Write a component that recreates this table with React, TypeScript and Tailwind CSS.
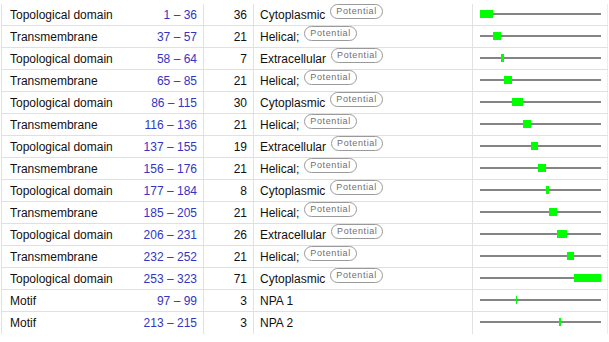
import React from "react";

type Feature = {
  key: string;
  start: number;
  end: number;
  desc: string;
  potential?: boolean;
};

const SEQ_LEN = 323;
const TRACK_W = 121;

const features: Feature[] = [
  { key: "Topological domain", start: 1, end: 36, desc: "Cytoplasmic", potential: true },
  { key: "Transmembrane", start: 37, end: 57, desc: "Helical;", potential: true },
  { key: "Topological domain", start: 58, end: 64, desc: "Extracellular", potential: true },
  { key: "Transmembrane", start: 65, end: 85, desc: "Helical;", potential: true },
  { key: "Topological domain", start: 86, end: 115, desc: "Cytoplasmic", potential: true },
  { key: "Transmembrane", start: 116, end: 136, desc: "Helical;", potential: true },
  { key: "Topological domain", start: 137, end: 155, desc: "Extracellular", potential: true },
  { key: "Transmembrane", start: 156, end: 176, desc: "Helical;", potential: true },
  { key: "Topological domain", start: 177, end: 184, desc: "Cytoplasmic", potential: true },
  { key: "Transmembrane", start: 185, end: 205, desc: "Helical;", potential: true },
  { key: "Topological domain", start: 206, end: 231, desc: "Extracellular", potential: true },
  { key: "Transmembrane", start: 232, end: 252, desc: "Helical;", potential: true },
  { key: "Topological domain", start: 253, end: 323, desc: "Cytoplasmic", potential: true },
  { key: "Motif", start: 97, end: 99, desc: "NPA 1" },
  { key: "Motif", start: 213, end: 215, desc: "NPA 2" },
];

function Track({ start, end }: { start: number; end: number }) {
  const len = end - start + 1;
  const left = ((start - 1) / SEQ_LEN) * TRACK_W;
  const width = Math.max(1, (len / SEQ_LEN) * TRACK_W);
  return (
    <div className="relative h-full" style={{ width: TRACK_W }}>
      <div className="absolute left-0 right-0 top-[9px] h-[2px] bg-[#858585]" />
      <div
        className="absolute top-[6px] h-[8px] bg-[#00ff00]"
        style={{ left, width }}
      />
    </div>
  );
}

export default function App() {
  return (
    <div
      className="w-[609px] h-[342px] bg-white overflow-hidden pt-[4px] text-[12px] text-[#111]"
      style={{ fontFamily: '"Liberation Sans", Arial, sans-serif' }}
    >
      <div className="ml-[1px] w-[607px] border-l border-[#e2e2e2]">
        {features.map((f, i) => (
          <div
            key={i}
            className="flex h-[22px] border-b border-[#e0e0e0] last:border-b-0 leading-[22px]"
          >
            <div className="w-[119px] pl-[8px] whitespace-nowrap">{f.key}</div>
            <div className="w-[83px] pr-[6px] text-right text-[#3434c4] border-r border-[#e2e2e2] whitespace-nowrap">
              {f.start} – {f.end}
            </div>
            <div className="w-[50px] pr-[6px] text-right border-r border-[#e2e2e2]">
              {f.end - f.start + 1}
            </div>
            <div className="w-[219px] pl-[6px] border-r border-[#e2e2e2] whitespace-nowrap">
              {f.desc}
              {f.potential && (
                <span className="ml-[5px] inline-block align-[5px] px-[5px] border border-[#9a9a9a] rounded-full text-[9px] leading-[13px] tracking-[0.6px] text-[#707070]">
                  Potential
                </span>
              )}
            </div>
            <div className="flex-1 pl-[7px] border-r border-[#ececec]">
              <Track start={f.start} end={f.end} />
            </div>
          </div>
        ))}
      </div>
    </div>
  );
}
